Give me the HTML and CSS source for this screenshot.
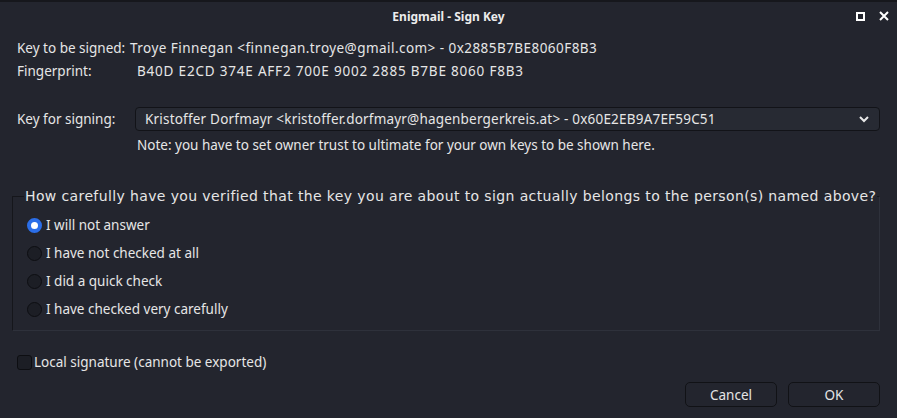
FILE: index.html
```html
<!DOCTYPE html>
<html>
<head>
<meta charset="utf-8">
<link rel="stylesheet" href="styles.css">
</head>
<body>
<div class="window">
  <div class="titlebar">
    <span class="title">Enigmail - Sign Key</span>
    <div class="wm">
      <span class="maxbox"></span>
      <svg class="close" width="10" height="10" viewBox="0 0 10 10"><path d="M1 1L9 9M9 1L1 9" stroke="#fff" stroke-width="2"/></svg>
    </div>
  </div>
  <div class="content">
    <div class="inforow">
      <span class="lbl1">Key to be signed:</span>
      <span class="val1">Troye Finnegan &lt;finnegan.troye@gmail.com&gt; - 0x2885B7BE8060F8B3</span>
    </div>
    <div class="inforow fp">
      <span class="lbl2">Fingerprint:</span>
      <span class="val2">B40D E2CD 374E AFF2 700E 9002 2885 B7BE 8060 F8B3</span>
    </div>
    <div class="signrow">
      <span class="lbl3">Key for signing:</span>
      <div class="select">
        <span class="val3">Kristoffer Dorfmayr &lt;kristoffer.dorfmayr@hagenbergerkreis.at&gt; - 0x60E2EB9A7EF59C51</span>
        <svg width="12" height="8" viewBox="0 0 12 8"><path d="M2 2L6 6L10 2" stroke="#e8e8e8" stroke-width="2" fill="none"/></svg>
      </div>
    </div>
    <div class="note">Note: you have to set owner trust to ultimate for your own keys to be shown here.</div>
    <fieldset class="group">
      <legend>How carefully have you verified that the key you are about to sign actually belongs to the person(s) named above?</legend>
      <label class="radio"><span class="dot checked"></span>I will not answer</label>
      <label class="radio"><span class="dot"></span>I have not checked at all</label>
      <label class="radio"><span class="dot"></span>I did a quick check</label>
      <label class="radio"><span class="dot"></span>I have checked very carefully</label>
    </fieldset>
    <label class="check"><span class="box"></span>Local signature (cannot be exported)</label>
    <div class="buttons">
      <button class="btn">Cancel</button>
      <button class="btn">OK</button>
    </div>
  </div>
</div>
</body>
</html>
```
FILE: styles.css
```css
html, body {
  margin: 0;
  padding: 0;
  background: #23252e;
}
body {
  font-family: "Noto Sans", sans-serif;
  font-size: 13.5px;
  color: #e6e6e6;
  width: 897px;
  height: 418px;
  overflow: hidden;
}
.window {
  border-top: 2px solid #16171c;
  height: 416px;
}
.titlebar {
  height: 28px;
  display: flex;
  align-items: center;
  justify-content: center;
  position: relative;
}
.title {
  font-weight: bold;
  font-size: 12px;
  color: #ececec;
}
.wm {
  position: absolute;
  right: 8px;
  top: 9px;
  display: flex;
  gap: 14px;
  align-items: center;
}
.maxbox {
  width: 5px;
  height: 5px;
  border: 2px solid #fff;
}
.content {
  padding: 6px 17px 0 17px;
}
.inforow {
  display: flex;
  height: 23px;
  align-items: center;
}
.lbl1 { width: 113px; }
.lbl2 { width: 120px; }
.val1 { letter-spacing: 0.45px; }
.val2 { letter-spacing: 0.8px; }
.val3 { letter-spacing: 0.2px; }
.signrow {
  display: flex;
  align-items: center;
  margin-top: 25px;
}
.lbl3 { width: 118px; }
.select {
  flex: 1;
  height: 22px;
  border: 1px solid #121318;
  border-radius: 4px;
  background: #272a33;
  display: flex;
  align-items: center;
  justify-content: space-between;
  padding: 0 9px 0 9px;
}
.note {
  margin-left: 120px;
  margin-top: 4px;
  height: 20px;
  line-height: 20px;
}
.group {
  margin: 33px 0 0 -5px;
  padding: 7px 0 7px 14px;
  border: 1px solid #15161b;
  border-right-color: #2e313b;
  border-bottom-color: #2e313b;
  min-width: 0;
}
.group legend {
  font-family: "DejaVu Sans", sans-serif;
  font-size: 14px;
  padding: 0 1px;
  margin-left: -3px;
  color: #e6e6e6;
  letter-spacing: 0.38px;
  white-space: nowrap;
}
.radio {
  display: flex;
  align-items: center;
  height: 28px;
}
.dot {
  border: 1px solid #0d0e12;
  border-radius: 50%;
  background: #1c1e25;
  margin-right: 4px;
  box-sizing: border-box;
  width: 15px;
  height: 15px;
}
.dot.checked {
  background: #fff;
  border: 4px solid #2b6ee8;
}
.check {
  display: flex;
  align-items: center;
  margin-top: 21px;
  height: 20px;
}
.box {
  width: 15px;
  height: 15px;
  box-sizing: border-box;
  border: 1px solid #0d0e12;
  border-radius: 3px;
  background: #1c1e25;
  margin-right: 2px;
}
.buttons {
  display: flex;
  justify-content: flex-end;
  gap: 11px;
  margin-top: 10px;
}
.btn {
  width: 92px;
  height: 25px;
  font-family: "Noto Sans", sans-serif;
  font-size: 13.5px;
  color: #e6e6e6;
  background: #23252e;
  border: 1px solid #111216;
  border-radius: 5px;
}
```
